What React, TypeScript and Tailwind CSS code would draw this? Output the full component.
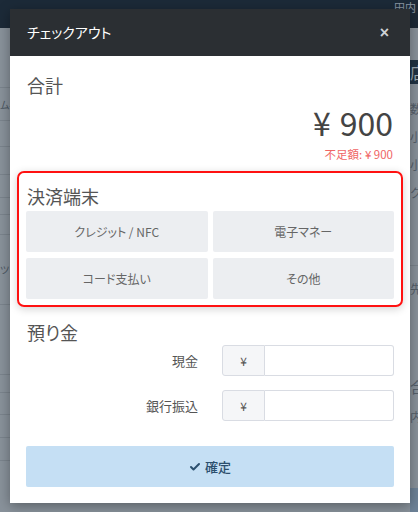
import { Check } from "lucide-react";

const jp = { fontFamily: '"Noto Sans CJK JP", "Noto Sans", sans-serif' };

const leftRows = [
  { h: 60, text: "" },
  { h: 33, text: "ム-1" },
  { h: 26, text: "" },
  { h: 28, text: "" },
  { h: 23, text: "" },
  { h: 17, text: "" },
  { h: 20, text: "" },
  { h: 70, text: "ツ" },
  { h: 70, text: "" },
  { h: 18, text: "" },
  { h: 22, text: "" },
  { h: 23, text: "" },
  { h: 23, text: "" },
];

const methods = ["クレジット / NFC", "電子マネー", "コード支払い", "その他"];

function Background() {
  return (
    <div className="flex flex-col h-[512px] bg-[#89929b]">
      <div className="h-[28px] bg-[#1c2a38] flex justify-end items-start pr-[2px]">
        <span className="text-[11px] leading-[14px] text-[#8a96a3]">田内</span>
      </div>
      <div className="flex flex-1">
        <div className="w-[10px] flex flex-col overflow-hidden">
          {leftRows.map((r, i) => (
            <div
              key={i}
              style={{ height: r.h }}
              className="border-b border-[#7b848d] text-[10px] text-[#4d5863] whitespace-nowrap flex items-center"
            >
              {r.text}
            </div>
          ))}
        </div>
        <div className="flex-1" />
        <div className="w-[8px] flex flex-col overflow-hidden text-[12px] text-[#55606b] whitespace-nowrap">
          <div className="h-[32px]" />
          <div className="h-[24px] bg-[#1f3142] text-[#9aa7b3] text-[16px] leading-[24px]">店</div>
          <div className="h-[34px] flex items-end">数</div>
          <div className="h-[28px] flex items-end">小</div>
          <div className="h-[28px] flex items-end">小</div>
          <div className="h-[28px] flex items-end">ク</div>
          <div className="h-[64px] border-b border-[#7b848d]" />
          <div className="h-[32px] flex items-end">先</div>
          <div className="h-[100px] flex items-end text-[15px]">合</div>
          <div className="h-[28px] flex items-end">内</div>
          <div className="flex-1" />
          <div className="h-[24px] bg-[#6d8297]" />
        </div>
      </div>
    </div>
  );
}

export default function App() {
  return (
    <div className="relative w-[418px] h-[512px] overflow-hidden [font-feature-settings:'palt']" style={jp}>
      <Background />

      {/* Modal */}
      <div className="absolute left-[10px] top-[9px] w-[400px] bg-white shadow-[0_3px_12px_rgba(0,0,0,0.35)]">
        <div className="h-[47px] bg-[#2b2f33] flex items-center justify-between pl-[17px] pr-[21px]">
          <span className="text-white text-[14px]">チェックアウト</span>
          <span className="text-[#cfd2d5] text-[16px] font-bold leading-none font-['Liberation_Sans',sans-serif]">×</span>
        </div>

        <div className="px-4 pt-[16px] pb-4">
          <div className="text-[18px] leading-[26px] text-[#555] pl-[1px]">合計</div>
          <div className="flex flex-col items-end pr-[1px]">
            <div className="flex gap-[9px] text-[32px] leading-[40px] text-[#444] mt-[4px]">
              <span>¥</span>
              <span>900</span>
            </div>
            <div className="text-[11.5px] leading-[16px] text-[#f06565] mt-[4px]">不足額: ¥ 900</div>
          </div>

          <div className="mt-[9px] mx-[-9px] px-[7px] pt-[10px] pb-[6px] border-2 border-[#ff1111] rounded-[7px] shadow-[0_2px_8px_rgba(0,0,0,0.18)]">
            <div className="text-[18px] leading-[26px] text-[#555] pl-[1px]">決済端末</div>
            <div className="grid grid-cols-2 gap-x-[5px] gap-y-[6px] mt-[2px]">
              {methods.map((m) => (
                <div
                  key={m}
                  className="h-[41px] bg-[#eceef1] rounded-[2px] flex items-center justify-center text-[12px] text-[#666]"
                >
                  {m}
                </div>
              ))}
            </div>
          </div>

          <div className="text-[18px] leading-[26px] text-[#555] mt-[12px] pl-[1px]">預り金</div>

          <div className="flex flex-col gap-[14px]">
            {["現金", "銀行振込"].map((l) => (
              <div key={l} className="flex items-center gap-[24px]">
                <div className="w-[172px] text-right text-[13px] text-[#555]">{l}</div>
                <div className="flex flex-1 h-[31px]">
                  <div className="w-[43px] bg-[#f5f6f8] border border-[#d9dce3] rounded-l-[3px] flex items-center justify-center text-[12px] text-[#555]">
                    ¥
                  </div>
                  <div className="flex-1 border border-l-0 border-[#d9dce3] rounded-r-[3px] bg-white" />
                </div>
              </div>
            ))}
          </div>

          <div className="mt-[25px] h-[41px] bg-[#c5dff4] rounded-[2px] flex items-center justify-center gap-[4px] text-[13px] text-[#2c4f6e] font-medium">
            <Check size={12} strokeWidth={4} />
            <span>確定</span>
          </div>
        </div>
      </div>
    </div>
  );
}
